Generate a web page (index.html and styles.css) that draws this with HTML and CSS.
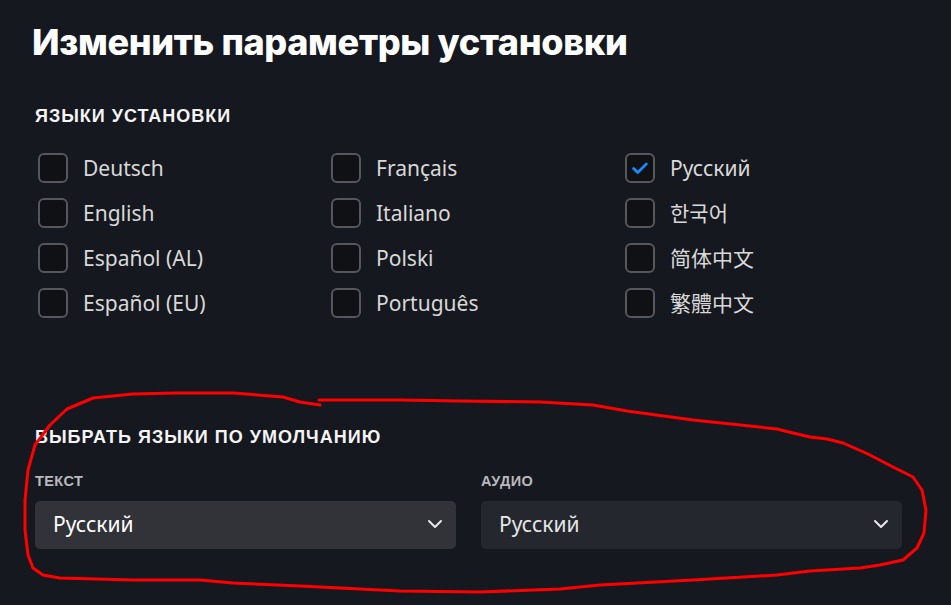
FILE: index.html
```html
<!DOCTYPE html>
<html lang="ru">
<head>
<meta charset="utf-8">
<link rel="stylesheet" href="styles.css">
</head>
<body>
<main class="page">
  <h1 class="title">Изменить параметры установки</h1>

  <section class="install">
    <h2 class="section-title">ЯЗЫКИ УСТАНОВКИ</h2>
    <div class="lang-grid">
      <label class="lang"><span class="box"></span><span class="name">Deutsch</span></label>
      <label class="lang"><span class="box"></span><span class="name">Français</span></label>
      <label class="lang"><span class="box checked"><svg viewBox="0 0 24 24" class="tick"><path d="M5 12.5l4.5 4.5L19 7.5" /></svg></span><span class="name">Русский</span></label>

      <label class="lang"><span class="box"></span><span class="name">English</span></label>
      <label class="lang"><span class="box"></span><span class="name">Italiano</span></label>
      <label class="lang"><span class="box"></span><span class="name cjk">한국어</span></label>

      <label class="lang"><span class="box"></span><span class="name">Español (AL)</span></label>
      <label class="lang"><span class="box"></span><span class="name">Polski</span></label>
      <label class="lang"><span class="box"></span><span class="name cjk">简体中文</span></label>

      <label class="lang"><span class="box"></span><span class="name">Español (EU)</span></label>
      <label class="lang"><span class="box"></span><span class="name">Português</span></label>
      <label class="lang"><span class="box"></span><span class="name cjk-tc">繁體中文</span></label>
    </div>
  </section>

  <section class="defaults">
    <h2 class="section-title wide">ВЫБРАТЬ ЯЗЫКИ ПО УМОЛЧАНИЮ</h2>
    <div class="selects">
      <div class="field">
        <div class="field-label">ТЕКСТ</div>
        <div class="select active"><span>Русский</span><svg class="chev" viewBox="0 0 16 10"><path d="M2 2l6 6 6-6"/></svg></div>
      </div>
      <div class="field">
        <div class="field-label">АУДИО</div>
        <div class="select"><span>Русский</span><svg class="chev" viewBox="0 0 16 10"><path d="M2 2l6 6 6-6"/></svg></div>
      </div>
    </div>
  </section>
</main>

<svg class="annotation" width="951" height="605" viewBox="0 0 951 605">
  <path d="M319 400 L400 400 L460 401 L540 402 L593 405 L627 411 L693 420 L777 429 L793 433 L810 437 L827 439 L843 443 L868 454 L893 467 L913 477 L922 490 L926 510 L924 533 L917 548 L903 560 L880 565 L860 568 L810 571 L777 575 L693 580 L600 585 L560 589 L480 592 L400 591 L300 586 L233 583 L200 580 L133 580 L60 578 L43 575 L33 568 L28 555 L25 530 L25 500 L28 470 L35 445 L50 425 L67 409 L93 398 L133 394 L177 393 L233 393 L283 397 L300 402 L320 405"/>
</svg>
</body>
</html>
```

FILE: styles.css
```css
* { box-sizing: border-box; }

html, body {
  margin: 0;
  padding: 0;
  background: #16181f;
  width: 951px;
  height: 605px;
  overflow: hidden;
}

.page {
  padding: 20px 49px 0 32px;
  font-family: "Noto Sans", "Open Sans", sans-serif;
  color: #e8e8e8;
}

.title {
  margin: 0;
  font-family: Inter, "Liberation Sans", sans-serif;
  font-weight: 800;
  font-size: 36px;
  line-height: 44px;
  color: #ffffff;
  letter-spacing: -0.35px;
}

.install {
  padding-left: 3px;
  margin-top: 42px;
}

.section-title {
  margin: 0;
  font-family: "Liberation Sans", Arial, sans-serif;
  font-weight: 700;
  font-size: 18px;
  line-height: 20px;
  color: #f4f4f4;
  letter-spacing: 1px;
}

.section-title.wide {
  letter-spacing: 1px;
}

.lang-grid {
  margin-top: 19px;
  padding-left: 3px;
  display: grid;
  grid-template-columns: 293px 294px 200px;
  grid-auto-rows: 45px;
}

.lang {
  display: flex;
  align-items: center;
}

.box {
  width: 30px;
  height: 30px;
  border: 2px solid #55575c;
  border-radius: 6px;
  background: #0f1115;
  flex: none;
  display: flex;
  align-items: center;
  justify-content: center;
}

.tick {
  width: 22px;
  height: 22px;
  fill: none;
  stroke: #1a8cff;
  stroke-width: 3;
  stroke-linecap: round;
  stroke-linejoin: round;
}

.name {
  margin-left: 15px;
  font-size: 21px;
  color: #d9d9d9;
  line-height: 30px;
}

.name.cjk {
  font-family: "Noto Sans", "Noto Sans CJK KR", "Noto Sans CJK SC", sans-serif;
}

.name.cjk-tc {
  font-family: "Noto Sans", "Noto Sans CJK TC", sans-serif;
}

.defaults {
  padding-left: 3px;
  margin-top: 102px;
}

.selects {
  margin-top: 26px;
  display: grid;
  grid-template-columns: 421px 421px;
  column-gap: 25px;
}

.field-label {
  font-family: "Liberation Sans", Arial, sans-serif;
  font-weight: 700;
  font-size: 14.5px;
  line-height: 16px;
  color: #b9b9bd;
  letter-spacing: 0.4px;
}

.select {
  margin-top: 12px;
  height: 48px;
  border-radius: 5px;
  background: #25272e;
  display: flex;
  align-items: center;
  justify-content: space-between;
  padding: 0 13px 2px 18px;
  font-size: 21px;
  color: #e6e6e6;
}

.select.active {
  background: #323338;
  color: #ffffff;
}

.chev {
  width: 16px;
  height: 10px;
  fill: none;
  stroke: #e8e8e8;
  stroke-width: 2;
  stroke-linecap: round;
  stroke-linejoin: round;
}

.annotation {
  position: absolute;
  left: 0;
  top: 0;
  pointer-events: none;
}

.annotation path {
  fill: none;
  stroke: #ff0000;
  stroke-width: 3;
  stroke-linejoin: round;
  stroke-linecap: round;
}
```
